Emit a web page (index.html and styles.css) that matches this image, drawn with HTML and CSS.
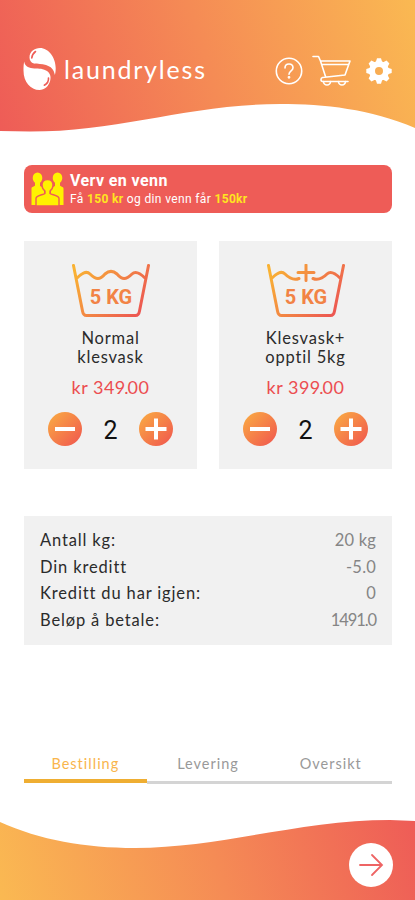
FILE: index.html
```html
<!DOCTYPE html>
<html lang="no">
<head>
  <meta charset="UTF-8">
  <meta name="viewport" content="width=device-width, initial-scale=1.0">
  <title>laundryless</title>
  <link rel="stylesheet" href="styles.css">
</head>
<body>
  <header>
    <div class="brand">
      <svg class="drop" width="34" height="44" viewBox="0 0 34 44">
        <path fill="#fff" d="M6.500 10.500C6.500 4.500 11.500 1 17 1c8.500 0 15.700 9.500 15.700 20 0 2.500-.2 5-.9 7-.8-5.500-4-8.500-8.800-10-4.500-1.500-8-.5-12-1.500-3-.8-4.500-3-4.500-6z"/>
        <path fill="#fff" d="M1.200 14.500c.5 4 3.500 6.200 8.300 6.800 5 .6 9-.2 13.500 2.200 4 2 5.300 6 4.200 10-1.600 6-5.700 9.500-10.700 9.500C7.500 43 .5 35 .5 23.500c0-3.500.1-6 .7-9z"/>
        <path class="shine" d="M8.800 11c.2-3 1.700-5 3.700-6.500M25.500 31c.3 3-1.200 5.500-4.200 7.200"/>
      </svg>
      <span class="name">laundryless</span>
    </div>
    <nav class="icons">
      <svg class="help" width="28" height="28" viewBox="0 0 28 28">
        <circle cx="14" cy="14" r="12.700"/>
        <path d="M10 11c0-2.500 1.700-4 4-4s4 1.500 4 3.700c0 3.300-4 3-4 6.600"/>
        <circle cx="14" cy="20.300" r=".6"/>
      </svg>
      <svg class="cart" width="40" height="32" viewBox="0 0 40 32">
        <path d="M1 1.500h5.500L8.500 6l5 15.500M8.500 6H38l-5 14-22.500 2.500c-2 .3-2 4 0 4H36M10 9.500h26"/>
        <path d="M11.500 26.500a3.500 3.500 0 0 0 7 0M26.500 26.500a3.500 3.500 0 0 0 7 0"/>
      </svg>
      <svg class="gear" width="26" height="26" viewBox="0 0 26 26">
        <circle cx="13" cy="13" r="7"/>
        <g>
          <path d="M9.500 5 11 .3h4L16.500 5zM9.500 21l1.500 4.700h4l1.500-4.700zM5 9.500.3 11v4L5 16.500zM21 9.500l4.700 1.500v4L21 16.500z"/>
          <path transform="rotate(45 13 13)" d="M9.500 5 11 .3h4L16.500 5zM9.500 21l1.500 4.700h4l1.500-4.700zM5 9.500.3 11v4L5 16.500zM21 9.500l4.700 1.500v4L21 16.500z"/>
        </g>
      </svg>
    </nav>
  </header>

  <main>
    <section class="promo">
      <svg width="33" height="34" viewBox="0 0 33 34">
        <g fill="#fff200">
          <ellipse cx="6.500" cy="6" rx="4.800" ry="5.500"/>
          <ellipse cx="26.500" cy="6" rx="4.800" ry="5.500"/>
          <path d="M4 9h5v5l4 2v17H.5V16.500c0-2 3.500-2 3.500-3zM24 9h5v4.500c0 1 3.500 1 3.500 3V33H20V16l4-2z"/>
        </g>
        <path class="front" d="M14 19c-2-1.500-3-3.500-3-6 0-3.500 2-5.500 5.500-5.500S22 9.500 22 13c0 2.500-1 4.500-3 6v2.500c2 1.500 9 1.500 9 5v7.500H5v-7.500c0-3.500 7-3.500 9-5z"/>
      </svg>
      <div>
        <h2>Verv en venn</h2>
        <p>Få <b>150 kr</b> og din venn får <b>150kr</b></p>
      </div>
    </section>

    <section class="cards">
      <article class="card">
        <svg class="tub" width="78" height="54" viewBox="0 0 78 54">
          <defs>
            <linearGradient id="warm" gradientUnits="userSpaceOnUse" x1="6" y1="4" x2="68" y2="54">
              <stop offset="0" stop-color="#f9b233"/>
              <stop offset=".5" stop-color="#f28345"/>
              <stop offset="1" stop-color="#ec5353"/>
            </linearGradient>
          </defs>
          <path d="M1.500 1.500l9 45.500c.5 3 1.500 4.500 4 4.500h49c2.500 0 3.500-1.500 4-4.500l9-45.500M5 14c4-4 9-8 13-4 6 6 10 6 15 0 4-3.500 8-3.500 12 0 5 6 9 6 15 0 4-4 9 0 13 4"/>
          <text x="39" y="40">5 KG</text>
        </svg>
        <h3>Normal<br>klesvask</h3>
        <div class="price">kr 349<i>.</i>00</div>
        <div class="stepper">
          <button aria-label="Færre"><svg width="34" height="34"><path d="M7 17h20"/></svg></button>
          <span>2</span>
          <button aria-label="Flere"><svg width="34" height="34"><path d="M6.500 17h21M17 6.500v21"/></svg></button>
        </div>
      </article>
      <article class="card">
        <svg class="tub" width="78" height="54" viewBox="0 0 78 54">
          <path d="M1.500 1.500l9 45.500c.5 3 1.500 4.500 4 4.500h49c2.500 0 3.500-1.500 4-4.500l9-45.500M5 14c4-4 9-8 13-4 5 5 9 6.500 14 4.500M46 14.500c5 2 9 .5 14-4.500 4-4 9 0 13 4M39 1v15.500M31 8.500h16"/>
          <text x="39" y="40">5 KG</text>
        </svg>
        <h3>Klesvask+<br>opptil 5kg</h3>
        <div class="price">kr 399<i>.</i>00</div>
        <div class="stepper">
          <button aria-label="Færre"><svg width="34" height="34"><path d="M7 17h20"/></svg></button>
          <span>2</span>
          <button aria-label="Flere"><svg width="34" height="34"><path d="M6.500 17h21M17 6.500v21"/></svg></button>
        </div>
      </article>
    </section>

    <dl class="summary">
      <div><dt>Antall kg:</dt><dd>20 kg</dd></div>
      <div><dt>Din kreditt</dt><dd>-5.0</dd></div>
      <div><dt>Kreditt du har igjen:</dt><dd>0</dd></div>
      <div><dt>Beløp å betale:</dt><dd class="tight">1491.0</dd></div>
    </dl>

    <nav class="tabs">
      <a class="active">Bestilling</a>
      <a>Levering</a>
      <a>Oversikt</a>
    </nav>
  </main>

  <footer>
    <button class="next" aria-label="Neste">
      <svg width="44" height="44" viewBox="0 0 44 44"><path d="M11 22h21M23 12l10 10-10 10"/></svg>
    </button>
  </footer>
</body>
</html>
```
FILE: styles.css
```css
:root {
  --red: #ee5c57;
  --orange: #f58b55;
  --yellow: #fab952;
  --panel: #f1f1f1;
  --text: #2b2b2b;
  --muted: #858585;
}
* { box-sizing: border-box; margin: 0; padding: 0; }
body {
  font-family: Lato, 'Open Sans', sans-serif;
  background: #fff;
  color: var(--text);
  width: 415px;
  height: 900px;
  overflow: hidden;
  display: flex;
  flex-direction: column;
}
svg { display: block; }
button { border: none; cursor: pointer; }

header {
  height: 132px;
  padding: 47px 22px 0 23px;
  display: flex;
  justify-content: space-between;
  align-items: flex-start;
  background: linear-gradient(73deg, var(--red), var(--orange) 50%, var(--yellow));
  clip-path: path('M0 0H415V128C370 109 325 104 280 104C190 104 120 131.500 30 131.500L0 131Z');
}
.brand { display: flex; align-items: center; gap: 7px; }
.brand .name {
  color: #fff;
  font-size: 25px;
  line-height: 44px;
  letter-spacing: 1.8px;
}
.shine { fill: none; stroke: var(--red); stroke-width: 1.6; stroke-linecap: round; }
.icons {
  display: flex;
  align-items: center;
  height: 48px;
  fill: none;
  stroke: #fff;
  stroke-width: 1.6;
  stroke-linejoin: round;
  stroke-linecap: round;
}
.help { margin-right: 9px; }
.cart { margin-right: 14px; }
.gear { stroke-width: 6; margin-right: 1px; }
.gear g { fill: #fff; stroke: none; }

main { padding: 33px 23px 0 24px; flex: 1; }
.promo {
  height: 48px;
  border-radius: 8px;
  background: var(--red);
  color: #fff;
  display: flex;
  align-items: center;
  gap: 6px;
  padding-left: 7px;
  font-family: Roboto, sans-serif;
}
.front { fill: #fff200; stroke: var(--red); stroke-width: 1.4; }
.promo h2 { font-size: 16px; line-height: 19px; font-weight: 700; letter-spacing: 0.4px; }
.promo p { font-size: 12px; line-height: 18px; letter-spacing: 0.35px; }
.promo b { color: #ffe51f; }

.cards { display: flex; gap: 22px; margin-top: 28px; }
.card {
  flex: 1;
  height: 228px;
  padding-top: 23px;
  background: var(--panel);
  display: flex;
  flex-direction: column;
  align-items: center;
}
.tub path { fill: none; stroke: url(#warm); stroke-width: 3; stroke-linecap: round; stroke-linejoin: round; }
.tub text { fill: #f28345; font: 700 20px Roboto, sans-serif; text-anchor: middle; }
.card h3 {
  margin-top: 11px;
  font-size: 16.500px;
  line-height: 19px;
  font-weight: 400;
  letter-spacing: 0.8px;
  text-align: center;
}
.price {
  margin-top: 9px;
  font-size: 18px;
  line-height: 22px;
  letter-spacing: 0.5px;
  color: #ec4d50;
}
.price i { font-style: normal; margin: 0 -1.500px; }
.stepper {
  margin-top: 14px;
  width: 125px;
  display: flex;
  justify-content: space-between;
  align-items: center;
}
.stepper button {
  width: 34px;
  height: 34px;
  border-radius: 50%;
  background: linear-gradient(135deg, #faae42, #f0544f);
}
.stepper path { stroke: #fff; stroke-width: 4; }
.stepper span { font: 25px/34px Roboto, sans-serif; color: #111; padding-top: 2px; height: 34px; }

.summary {
  margin-top: 47px;
  height: 129px;
  padding: 11px 16px;
  background: var(--panel);
  font-size: 16.500px;
  line-height: 26.700px;
  letter-spacing: 0.85px;
}
.summary div { display: flex; justify-content: space-between; }
.summary dd { color: var(--muted); letter-spacing: 0.2px; }
.summary .tight { letter-spacing: -1.1px; }

.tabs {
  margin-top: 105px;
  display: flex;
  font-size: 14.500px;
  letter-spacing: 1px;
  color: #999;
}
.tabs a {
  flex: 1;
  height: 34px;
  line-height: 27px;
  text-align: center;
  border-bottom: 3px solid #d4d4d4;
}
.tabs .active {
  color: #f9b54c;
  height: 33px;
  border-bottom: 4px solid #efae32;
}

footer {
  height: 80px;
  padding: 23px 22px 0;
  display: flex;
  justify-content: flex-end;
  background: linear-gradient(73deg, var(--yellow), var(--orange) 52%, var(--red));
  clip-path: path('M0 2C40 20 85 28 135 28C220 28 300 0 390 0L415 1V80H0Z');
}
.next { width: 44px; height: 44px; border-radius: 50%; background: #fff; }
.next path { fill: none; stroke: #ee6464; stroke-width: 1.8; stroke-linecap: round; }
```
